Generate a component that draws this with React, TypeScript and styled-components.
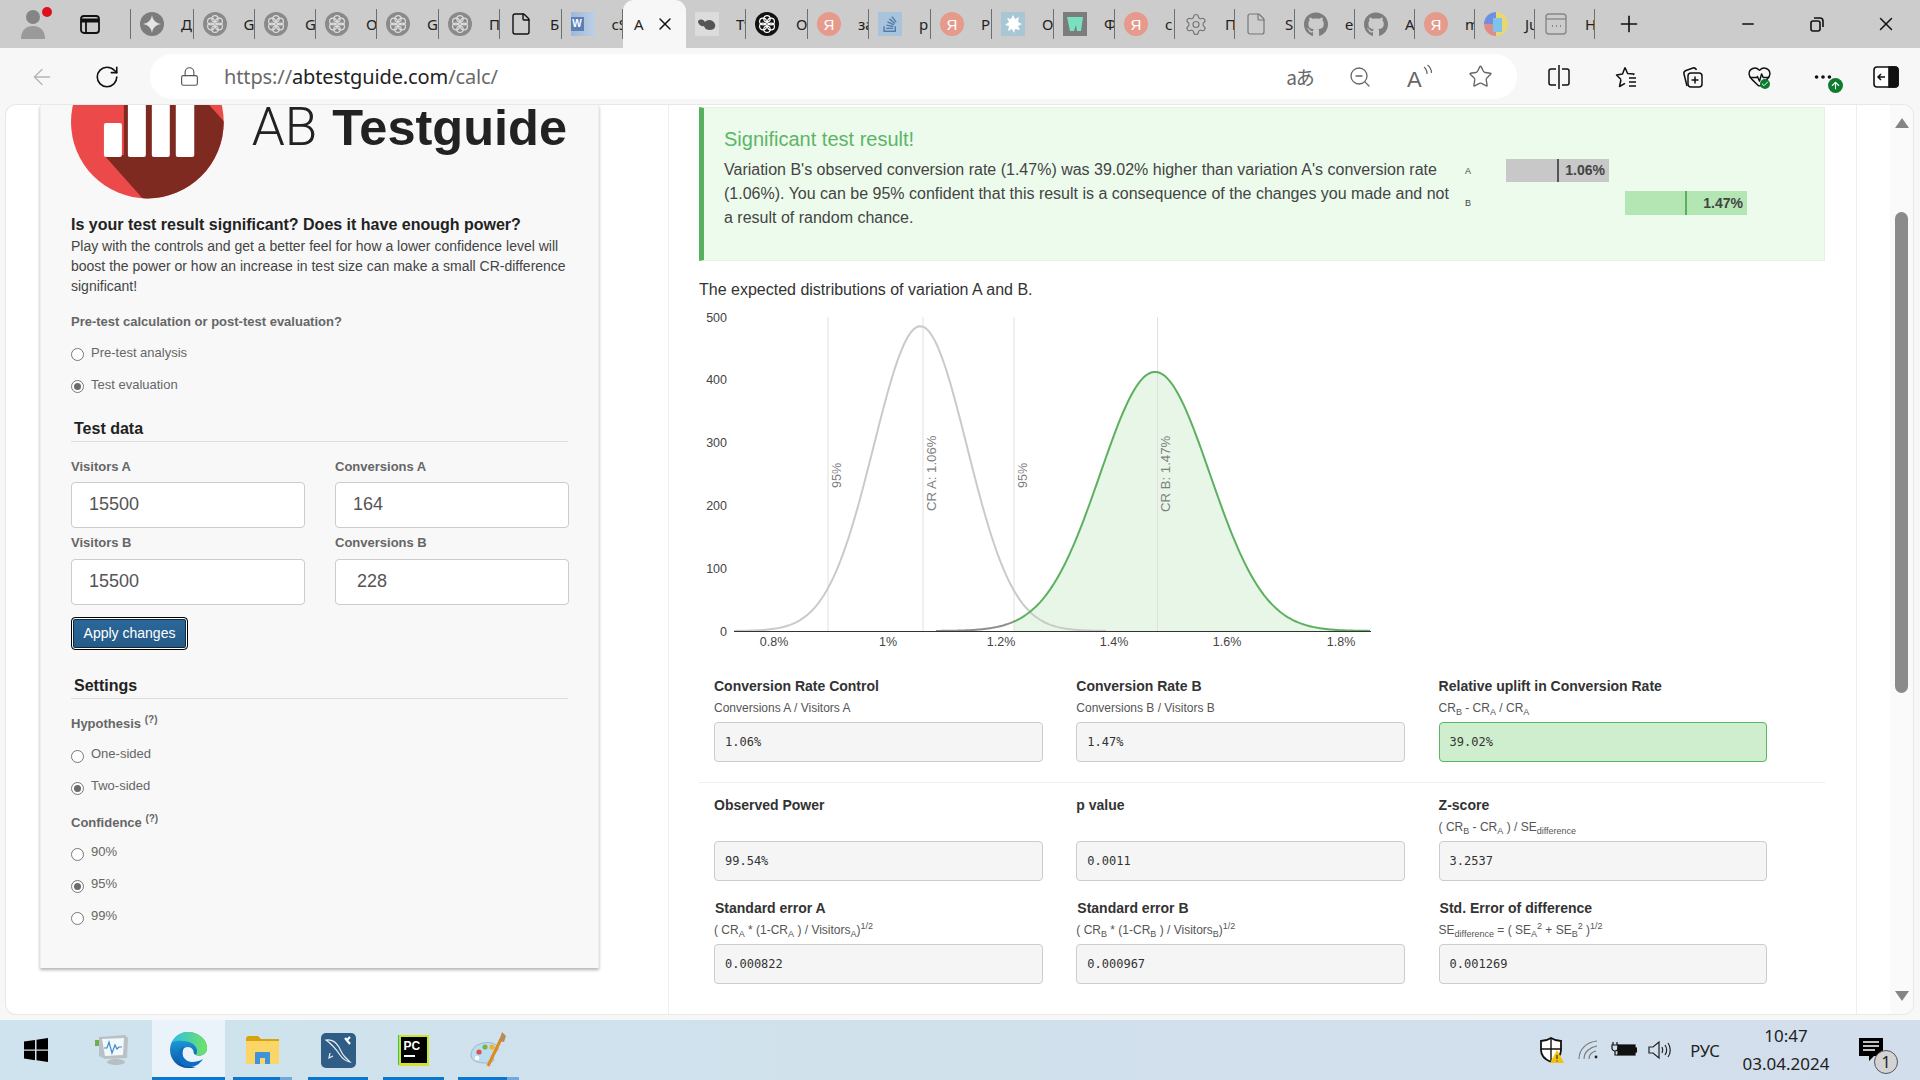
import React from "react";
import styled, { createGlobalStyle } from "styled-components";
import { ArrowLeft, RotateCw, Lock, ZoomOut, Star, Ellipsis, Plus, Minus, X, Settings, File, HeartPulse, Check, ArrowUp } from "lucide-react";
import { FaGithub, FaStackOverflow } from "react-icons/fa";

const Global = createGlobalStyle`
  html, body { margin: 0; padding: 0; background: #f7f7f7; }
  * { box-sizing: border-box; }
  body { font-family: "Liberation Sans", Arial, sans-serif; color: #333; }
`;

const Screen = styled.div`
  width: 1920px; height: 1080px; overflow: hidden; display: flex; flex-direction: column; background: #f7f7f7;
`;

/* ---------- tab strip ---------- */
const TabStrip = styled.div`
  height: 48px; flex: none; background: #cccccc; display: flex; align-items: center;
`;
const Slot = styled.div<{ $w: number; $left?: number }>`
  width: ${p => p.$w}px; flex: none; display: flex; align-items: center; justify-content: center; position: relative; color: #111;
  margin-left: ${p => p.$left ?? 0}px;
`;
const TabList = styled.div`
  margin-left: 16px; display: flex; align-items: center; height: 100%; border-left: 0;
`;
const Tab = styled.div<{ $w: number; $active?: boolean }>`
  width: ${p => p.$w}px; flex: none; overflow: hidden; display: flex; align-items: center; white-space: nowrap;
  font-family: "Noto Sans", sans-serif; font-size: 15px; color: #222;
  height: ${p => (p.$active ? 48 : 30)}px;
  padding-left: ${p => (p.$active ? 11 : 9)}px;
  border-right: ${p => (p.$active ? "0" : "1px solid #6e6e6e")};
  background: ${p => (p.$active ? "#f7f7f7" : "transparent")};
  border-radius: ${p => (p.$active ? "11px 11px 0 0" : "0")};
  align-self: ${p => (p.$active ? "flex-end" : "center")};
`;
const TabLead = styled.div`
  width: 1px; height: 30px; background: #6e6e6e; flex: none;
`;
const TabIcon = styled.div`
  width: 24px; height: 24px; flex: none; display: flex; align-items: center; justify-content: center; margin-right: 17px;
`;
const TabClose = styled.div`
  margin-left: 11px; display: flex; align-items: center; color: #111;
`;
const YaBadge = styled.div`
  width: 24px; height: 24px; border-radius: 50%; background: #e59a8c; color: #fff; font-size: 15px; font-family: "Liberation Sans", sans-serif;
  display: flex; align-items: center; justify-content: center;
`;
const WordBadge = styled.div`
  width: 24px; height: 24px; background: linear-gradient(90deg, #9fb9d8, #bccfe4); display: flex; align-items: center; justify-content: flex-start;
`;
const WordLetter = styled.span`
  background: #5a80b8; color: #fff; font: bold 10px "Liberation Sans", sans-serif; width: 13px; height: 14px; text-align: center; line-height: 14px;
`;
const WindowControls = styled.div`
  margin-left: auto; display: flex;
`;
const AvatarDot = styled.div`
  position: absolute; right: 14.5px; top: -2px; width: 10px; height: 10px; border-radius: 50%; background: #e0101a;
`;

/* ---------- toolbar ---------- */
const Toolbar = styled.div`
  height: 57px; flex: none; display: flex; align-items: flex-start; padding-top: 6px; background: #f7f7f7;
`;
const NavGroup = styled.div`
  margin-left: 16px; display: flex; height: 45px; align-items: center; margin-right: 4px;
`;
const AddressBar = styled.div`
  width: 1367px; height: 45px; flex: none; background: #fff; border-radius: 22px; display: flex; align-items: center; padding: 0 22px 0 25px;
`;
const UrlText = styled.div`
  font-family: "Noto Sans", sans-serif; font-size: 20px; color: #6a6a6a; margin-left: 21px; letter-spacing: -0.12px;
`;
const UrlHost = styled.span`
  color: #222;
`;
const AddressIcons = styled.div`
  margin-left: auto; display: flex; align-items: center; gap: 30px; color: #666;
`;
const AddressIcon = styled.div`
  width: 30px; height: 30px; display: flex; align-items: center; justify-content: center;
`;
const TranslateText = styled.span`
  font-family: "Noto Sans CJK JP", sans-serif; font-size: 19px; color: #666; white-space: nowrap; letter-spacing: -1px;
`;
const ToolGroup = styled.div`
  margin-left: 8px; display: flex; height: 45px; align-items: center;
`;
const UpdateBadge = styled.div`
  position: absolute; left: 35px; top: 12px; width: 15px; height: 15px; border-radius: 50%; background: #0f7b2f; color: #fff;
  display: flex; align-items: center; justify-content: center;
`;
const CheckBadge = styled.div`
  position: absolute; left: 35px; top: 15px; width: 10px; height: 10px; border-radius: 50%; background: #0f7b2f; color: #fff;
  display: flex; align-items: center; justify-content: center;
`;

/* ---------- page ---------- */
const PageArea = styled.div`
  height: 915px; flex: none; padding: 0 7px 6px 6px;
`;
const Card = styled.div`
  height: 909px; background: #fff; border-radius: 10px; box-shadow: 0 0 0 1px #e8e8e8; display: flex; overflow: hidden;
`;
const Sidebar = styled.aside`
  margin-left: 34px; width: 559px; height: 863px; flex: none; background: #f8f8f8; padding: 0 31px;
  border-left: 1px solid #eee; border-right: 1px solid #eee;
  box-shadow: 0 2px 3px rgba(0, 0, 0, 0.3);
  margin-bottom: 3px;
`;
const Brand = styled.div`
  height: 94px; margin-left: -1px; display: flex; align-items: flex-start;
`;
const BrandName = styled.div`
  margin-left: 28px; margin-top: 4px; font-size: 53px; line-height: 36px; color: #222; white-space: nowrap;
  font-family: "Roboto", "Liberation Sans", sans-serif; font-weight: 300;
`;
const BrandBold = styled.b`
  font-family: "Liberation Sans", sans-serif; font-size: 50.5px; font-weight: 700; margin-left: 2px;
`;
const Lead = styled.h2`
  margin: 16px 0 0 -1px; font-size: 16px; line-height: 20px; font-weight: 700; color: #222; white-space: nowrap;
`;
const Intro = styled.p`
  margin: 1px 0 0 -1px; font-size: 14px; line-height: 20px; color: #444; width: 510px;
`;
const Question = styled.div<{ $top: number }>`
  margin: ${p => p.$top}px 0 0 -1px; font-size: 13px; line-height: 20px; font-weight: 700; color: #666;
`;
const Tip = styled.sup`
  font-size: 10px; line-height: 0; font-weight: 700; vertical-align: 5px;
`;
const RadioGroup = styled.div<{ $top: number }>`
  margin: ${p => p.$top}px 0 0 -1px;
`;
const RadioRow = styled.label`
  height: 32px; display: flex; align-items: center; font-size: 13px; color: #666; gap: 7px;
`;
const RadioMark = styled.span<{ $on?: boolean }>`
  width: 13px; height: 13px; margin-top: 3px; border-radius: 50%; border: 1px solid #777; flex: none; background: #fff;
  display: flex; align-items: center; justify-content: center;
  &::after { content: ""; width: 7px; height: 7px; border-radius: 50%; background: ${p => (p.$on ? "#6b6b6b" : "transparent")}; }
`;
const RadioText = styled.span`
  margin-top: -2px;
`;
const SectionTitle = styled.h3<{ $top: number }>`
  margin: ${p => p.$top}px -1px 0 -1px; padding: 0 0 2px 3px; font-size: 16px; line-height: 20px; font-weight: 700; color: #222;
  border-bottom: 1px solid #ddd; height: 23px;
`;
const Fields = styled.div`
  display: grid; grid-template-columns: 233.5px 233.5px; column-gap: 30.5px; margin: 15px 0 0 -1px;
`;
const Field = styled.div<{ $row2?: boolean }>`
  margin-top: ${p => (p.$row2 ? 5 : 0)}px;
`;
const FieldLabel = styled.div<{ $gap: number }>`
  font-size: 13px; line-height: 20px; font-weight: 700; color: #666; margin-bottom: ${p => p.$gap}px;
`;
const NumberBox = styled.input<{ $pad?: number }>`
  display: block; width: 100%; height: 46px; border: 1px solid #ccc; border-radius: 4px; background: #fff; outline: 0;
  font: 18px "Liberation Sans", sans-serif; color: #555; padding: 0 0 0 ${p => p.$pad ?? 17}px;
`;
const ApplyButton = styled.button`
  margin: 12px 0 0 -1px; display: block; width: 117px; height: 33px; padding: 0; border: 1px solid #000; border-radius: 4px;
  background: linear-gradient(#2c689c, #255a86); color: #fff; font: 14px "Liberation Sans", sans-serif;
  box-shadow: inset 0 0 0 1px #fff, inset 0 0 0 2px #10283e;
`;

/* ---------- main ---------- */
const Main = styled.main`
  margin-left: 69px; width: 1189px; flex: none; height: 909px; border-left: 1px solid #eee; border-right: 1px solid #eee;
  padding: 2px 31px 0 30px; overflow: hidden;
`;
const Alert = styled.section`
  height: 154px; background: #ecfbec; border: 1px solid #e3f2e3; border-left: 5px solid #56b05f; display: flex; padding-left: 20px;
`;
const AlertCopy = styled.div`
  width: 736px; flex: none; padding-top: 20px;
`;
const AlertTitle = styled.h4`
  margin: 0; font-size: 20px; line-height: 22px; font-weight: 400; color: #5cb567;
`;
const AlertText = styled.p`
  margin: 8px 0 0; font-size: 16px; line-height: 24px; color: #444;
`;
const Mini = styled.div`
  padding-top: 51px; margin-left: 5px; display: flex; flex-direction: column; gap: 9px;
`;
const MiniRow = styled.div`
  display: flex; align-items: center;
`;
const MiniLetter = styled.span`
  width: 41px; font-size: 9px; color: #444; flex: none;
`;
const MiniBar = styled.div<{ $offset: number; $w: number; $h: number; $bg: string }>`
  position: relative; margin-left: ${p => p.$offset}px; width: ${p => p.$w}px; height: ${p => p.$h}px; background: ${p => p.$bg};
  font-size: 14px; font-weight: 700; color: #444; text-align: right; padding-right: 4px; line-height: ${p => p.$h}px;
`;
const MiniMark = styled.i<{ $x: number; $c: string }>`
  position: absolute; left: ${p => p.$x}px; top: 0; bottom: 0; width: 2px; background: ${p => p.$c};
`;
const ChartCaption = styled.div`
  margin-top: 19px; font-size: 16px; line-height: 20px; color: #333;
`;
const ChartSvg = styled.svg`
  display: block; width: 690px; height: 376px;
  text { font-family: "Liberation Sans", sans-serif; }
`;
const Stats = styled.div<{ $top: number }>`
  padding-left: 15px; display: grid; grid-template-columns: repeat(3, 328.5px); column-gap: 33.8px; margin-top: ${p => p.$top}px;
`;
const StatTitle = styled.div<{ $nudge?: number }>`
  font-size: 14px; line-height: 20px; font-weight: 700; color: #333; margin-left: ${p => p.$nudge ?? 0}px; white-space: nowrap;
`;
const StatFormula = styled.div`
  margin-top: 4px; height: 16px; font-size: 12px; line-height: 16px; color: #555; white-space: nowrap;
  sub, sup { font-size: 9px; line-height: 0; }
`;
const StatBox = styled.div<{ $good?: boolean }>`
  margin-top: 6px; height: 40px; border-radius: 4px; border: 1px solid ${p => (p.$good ? "#5cb567" : "#ccc")};
  background: ${p => (p.$good ? "#cfeecd" : "#f5f5f5")}; padding-left: 10px; line-height: 38px;
  font-family: "DejaVu Sans Mono", monospace; font-size: 12px; color: #333;
`;
const Rule = styled.hr`
  margin: 20px 0 0; border: 0; border-top: 1px solid #eee; height: 0;
`;
const Gutter = styled.div`
  width: 56px; flex: none; padding-left: 33px;
`;
const Track = styled.div`
  height: 909px; background: #fafafa; display: flex; flex-direction: column; align-items: center; padding: 13px 0;
`;
const ArrowUpMark = styled.div`
  width: 0; height: 0; border-left: 7px solid transparent; border-right: 7px solid transparent; border-bottom: 10px solid #858585;
`;
const ArrowDownMark = styled.div`
  margin-top: auto; width: 0; height: 0; border-left: 7px solid transparent; border-right: 7px solid transparent; border-top: 10px solid #858585;
`;
const Thumb = styled.div`
  margin-top: 84px; width: 13px; height: 481px; border-radius: 7px; background: #8b8b8b;
`;

/* ---------- taskbar ---------- */
const Taskbar = styled.footer`
  height: 60px; flex: none; display: flex; align-items: stretch;
  background: linear-gradient(90deg, #cee3ed, #d0e1ec 45%, #d3deec);
`;
const TaskItem = styled.div<{ $w: number; $active?: boolean; $inset?: number; $blue?: number }>`
  position: relative; width: ${p => p.$w}px; flex: none; display: flex; align-items: center; justify-content: center;
  background: ${p => (p.$active ? "#e9f3f9" : "transparent")};
  &::after {
    content: ""; display: ${p => (p.$blue ? "block" : "none")}; position: absolute; bottom: 0; height: 3px;
    left: ${p => p.$inset ?? 0}px; right: ${p => p.$inset ?? 0}px;
    background: linear-gradient(90deg, #0a78cf ${p => p.$blue}%, #6fa9de ${p => p.$blue}%);
  }
`;
const PcIcon = styled.div`
  width: 30px; height: 30px; background: #000; border: 2px solid #cde32c; color: #fff; font: bold 12px "Liberation Sans", sans-serif;
  padding: 3px 0 0 3px; line-height: 12px; box-shadow: -1px 0 0 #2fc36c, 0 1px 0 #e2dc2b;
`;
const PcBar = styled.div`
  width: 11px; height: 2px; background: #fff; margin-top: 3px;
`;
const Tray = styled.div`
  margin-left: auto; display: flex; align-items: stretch;
`;
const TrayItem = styled.div<{ $w: number }>`
  width: ${p => p.$w}px; flex: none; display: flex; align-items: center; justify-content: center; position: relative; color: #222;
`;
const TrayText = styled.div`
  font-family: "Noto Sans", sans-serif; font-size: 16.5px; color: #222;
`;
const Clock = styled.div`
  font-family: "Noto Sans", sans-serif; font-size: 17px; line-height: 28px; text-align: center; color: #222;
`;
const NotifyCount = styled.div`
  position: absolute; left: 30px; top: 30px; width: 24px; height: 24px; border-radius: 50%; background: #d3d3d3; border: 1px solid #555;
  font: 16px "Noto Sans", sans-serif; color: #222; display: flex; align-items: center; justify-content: center;
`;

/* ---------- drawings ---------- */
const GptMark = ({ bg, fg }: { bg: string; fg: string }) => (
  <svg width="24" height="24" viewBox="0 0 24 24">
    <circle cx="12" cy="12" r="12" fill={bg} />
    <g fill="none" stroke={fg} strokeWidth="1.2">
      <circle cx="8" cy="9.5" r="3.4" />
      <circle cx="16" cy="9.5" r="3.4" />
      <circle cx="8" cy="14.5" r="3.4" />
      <circle cx="16" cy="14.5" r="3.4" />
      <circle cx="12" cy="6.8" r="3.2" />
      <circle cx="12" cy="17.2" r="3.2" />
    </g>
  </svg>
);
const SparkMark = () => (
  <svg width="24" height="24" viewBox="0 0 24 24">
    <circle cx="12" cy="12" r="12" fill="#7c7c7c" />
    <path d="M12 3c.8 5 3.5 8.200 9 9-5.500.8-8.200 4-9 9-.8-5-3.500-8.200-9-9 5.500-.8 8.200-4 9-9z" fill="#e4e4e4" />
  </svg>
);
const RaccMark = () => (
  <svg width="24" height="24" viewBox="0 0 24 24">
    <rect width="24" height="24" fill="#dcdcdc" />
    <path d="M3 9c3-3 6-1 7 1 2-3 8-3 10 2 1 3-1 6-5 6-3 0-5-1-6-4-3 1-6-2-6-5z" fill="#555" />
  </svg>
);
const StackMark = () => (
  <svg width="24" height="24" viewBox="0 0 24 24">
    <rect width="24" height="24" fill="#a9c3dc" />
    <foreignObject x="3" y="3" width="18" height="18"><FaStackOverflow size={18} color="#4f7ca8" /></foreignObject>
  </svg>
);
const SplatMark = () => (
  <svg width="24" height="24" viewBox="0 0 24 24">
    <rect width="24" height="24" fill="#a8c6d4" />
    <path d="M12 3l2 4 4-2-1 5 4 2-4 2 2 4-5-1-1 4-2-4-4 2 1-5-4-1 4-3-2-4 4 1z" fill="#fff" />
  </svg>
);
const TealMark = () => (
  <svg width="24" height="24" viewBox="0 0 24 24">
    <rect width="24" height="24" fill="#7c7c7c" />
    <path d="M4 5h16l-2 14h-4l-1-6-2 6H7z" fill="#7be0c0" />
  </svg>
);
const MultiMark = () => (
  <svg width="24" height="24" viewBox="0 0 24 24">
    <circle cx="12" cy="12" r="12" fill="#e9d772" />
    <path d="M12 0a12 12 0 0 0-12 12h12z" fill="#6f8fe0" />
    <path d="M0 12a12 12 0 0 0 12 12V12z" fill="#df8b8b" />
    <rect x="9" y="6" width="9" height="14" fill="#7fc2ea" />
  </svg>
);
const WinTabMark = () => (
  <svg width="24" height="24" viewBox="0 0 24 24" fill="none" stroke="#888" strokeWidth="1.4">
    <rect x="2" y="2" width="20" height="20" rx="3" />
    <path d="M2 7h20" />
    <path d="M8 14h1M12 14h1M16 14h1" strokeWidth="2" />
  </svg>
);
const PanelMark = () => (
  <svg width="26" height="24" viewBox="0 0 26 24" fill="none" stroke="#111" strokeWidth="1.6">
    <rect x="1" y="2" width="24" height="20" rx="3" fill="#fff" />
    <path d="M16 2h6a3 3 0 0 1 3 3v14a3 3 0 0 1-3 3h-6z" fill="#111" />
    <path d="M12 12H5M8 9l-3 3 3 3" strokeWidth="1.5" />
  </svg>
);
const SplitMark = () => (
  <svg width="24" height="26" viewBox="0 0 24 26" fill="none" stroke="#111" strokeWidth="1.5">
    <path d="M9 5H4a2 2 0 0 0-2 2v12a2 2 0 0 0 2 2h5" />
    <path d="M12 1v24" />
    <path d="M15 5h5a2 2 0 0 1 2 2v12a2 2 0 0 1-2 2h-5" />
  </svg>
);
const RestoreMark = () => (
  <svg width="16" height="16" viewBox="0 0 16 16" fill="none" stroke="#111" strokeWidth="1.6">
    <rect x="2" y="5" width="9" height="10" rx="2" />
    <path d="M5 2h6a3 3 0 0 1 3 3v6" />
  </svg>
);
const FavoritesMark = () => (
  <svg width="24" height="24" viewBox="0 0 24 24" fill="none" stroke="#111" strokeWidth="1.5" strokeLinejoin="round">
    <path d="M11 2.500l2.600 6 6.400.5-1 .8M7 14.500l-1.500 7 5.500-3.200M7 14.500L2.500 10l6-.9L11 2.500" />
    <path d="M15 13h7M15 17h7M15 21h7" />
  </svg>
);
const CollectionsMark = () => (
  <svg width="26" height="26" viewBox="0 0 26 26" fill="none" stroke="#111" strokeWidth="1.5">
    <path d="M8 22L5 10c-.5-2 .5-3 2-3.500L14 4c2-.5 3 .5 3.500 2" />
    <rect x="9" y="9" width="14" height="14" rx="3" />
    <path d="M16 12.500v7M12.500 16h7" />
  </svg>
);
const ReadAloudMark = () => (
  <svg width="30" height="26" viewBox="0 0 30 26" fill="none" stroke="#666" strokeWidth="1.2">
    <text x="2" y="23" fontFamily="Liberation Sans, sans-serif" fontSize="22" fill="#666" stroke="none">A</text>
    <path d="M19 3c2 1.500 3 4 3 7M22.500 1c2.500 2 4 5 4 8" />
  </svg>
);
const BrandMark = () => (
  <svg width="153" height="94" viewBox="0 0 153 94">
    <defs>
      <clipPath id="brandDisc"><circle cx="76.500" cy="17" r="76.500" /></clipPath>
    </defs>
    <circle cx="76.500" cy="17" r="76.500" fill="#ec4a4a" />
    <g clipPath="url(#brandDisc)">
      <polygon points="33,50 74,96 160,96 160,24 136,-3 53,-3 53,50" fill="#7f2a20" />
    </g>
    <g fill="#fff">
      <rect x="33" y="18" width="18" height="34" rx="2" />
      <rect x="57" y="-4" width="18" height="56" rx="2" />
      <rect x="81" y="-4" width="18" height="56" rx="2" />
      <rect x="105" y="-4" width="18.500" height="56" rx="2" />
    </g>
  </svg>
);
const EdgeMark = () => (
  <svg width="37" height="36" viewBox="0 0 37 36">
    <defs>
      <linearGradient id="edgeA" x1="0.3" y1="1" x2="0.2" y2="0.1"><stop offset="0" stopColor="#0b4f9c" /><stop offset="1" stopColor="#1fa6e4" /></linearGradient>
      <linearGradient id="edgeB" x1="0" y1="0.5" x2="1" y2="0.5"><stop offset="0" stopColor="#2fbde8" /><stop offset="1" stopColor="#70e55f" /></linearGradient>
    </defs>
    <path d="M18 0c10 0 19 7 19 16 0 6-6 9-11 7-3-1-2-3-3-5-2-4-8-4-11 0-3 4-2 10 3 14 3 2 7 3 11 3-3 1-5 1-8 1C8 36 0 28 0 18S8 0 18 0z" fill="url(#edgeA)" />
    <path d="M2 10C6 3 12 0 18 0c10 0 19 7 19 16 0 6-6 9-11 7 2-4 1-8-3-11-6-4-15-4-21-2z" fill="url(#edgeB)" />
    <path d="M13 24c2 5 9 9 20 3-3 5-8 8-14 8-6 0-11-5-11-11 0-5 3-8 7-10-2 3-3 6-2 10z" fill="#0e6ec4" />
  </svg>
);
const FolderMark = () => (
  <svg width="33" height="28" viewBox="0 0 33 28">
    <path d="M0 3a3 3 0 0 1 3-3h9l3 3h18v5H0z" fill="#d9a20f" />
    <path d="M0 5h33v21a2 2 0 0 1-2 2H2a2 2 0 0 1-2-2z" fill="#fbd565" />
    <path d="M10 16h13a1 1 0 0 1 1 1v11h-5v-6h-5v6H9V17a1 1 0 0 1 1-1z" fill="#3f93d8" />
  </svg>
);
const MonitorMark = () => (
  <svg width="34" height="30" viewBox="0 0 34 30">
    <path d="M4 2l26-2 3 3-1 20-22 1-6-3z" fill="#b9c1c6" />
    <path d="M7 4l22-1-1 17-18 1z" fill="#f2f8fc" />
    <path d="M9 13h3l2-6 3 11 3-8 2 4 2-2h3" fill="none" stroke="#3d87c9" strokeWidth="1.2" />
    <ellipse cx="21" cy="27" rx="9" ry="3" fill="#b8bec2" />
    <rect x="0" y="5" width="4" height="6" fill="#6bb04b" />
  </svg>
);
const MysqlMark = () => (
  <svg width="35" height="35" viewBox="0 0 35 35">
    <rect width="35" height="35" rx="5" fill="#2f5d86" />
    <path d="M5 7c6-1 10 2 13 7 2 4 3 7 6 10l5 5c-5-1-8-4-10-7-4-6-7-10-14-15zM9 20l-1 5 4-2" fill="none" stroke="#e8f0f6" strokeWidth="1.2" />
    <path d="M24 5l5 6M29 4l-3 3" stroke="#fff" strokeWidth="2.200" fill="none" />
  </svg>
);
const PaletteMark = () => (
  <svg width="37" height="36" viewBox="0 0 37 36">
    <path d="M1 23C1 14 12 9 22 11c7 2 8 7 3 10-4 2-4 3-2 5 3 3-2 5-7 5C8 31 1 29 1 23z" fill="#bcdcf0" stroke="#9bb9cf" />
    <circle cx="9" cy="20" r="2.600" fill="#d9534f" /><circle cx="15" cy="15" r="2.600" fill="#7cb342" /><circle cx="22" cy="15" r="2.600" fill="#f0b429" /><circle cx="7" cy="26" r="2.200" fill="#fff" />
    <path d="M18 34L31 7" stroke="#e08a1e" strokeWidth="3" />
    <path d="M29 9l3-9 4 4-2 6z" fill="#b98a55" />
  </svg>
);
const WindowsMark = () => (
  <svg width="24" height="24" viewBox="0 0 24 24" fill="#000">
    <path d="M0 3.500l11-1.500v9.500H0zM12.500 1.800L24 0v11.500H12.500zM0 12.800h11v9.400L0 20.600zM12.500 12.800H24V24l-11.500-1.800z" />
  </svg>
);
const ShieldMark = () => (
  <svg width="26" height="28" viewBox="0 0 26 28">
    <path d="M12 2c3 2 6 3 10 3v9c0 6-5 10-10 12C7 24 2 20 2 14V5c4 0 7-1 10-3z" fill="#fff" stroke="#111" strokeWidth="1.8" />
    <path d="M12 2v24M2 13h20" stroke="#111" strokeWidth="1.4" />
    <path d="M18 14l7 13H11z" fill="#f4c20d" />
    <path d="M18 19v4M18 24.500v1" stroke="#333" strokeWidth="1.200" />
  </svg>
);
const WifiMark = () => (
  <svg width="22" height="20" viewBox="0 0 22 20" fill="none" stroke="#777" strokeWidth="1.100">
    <path d="M1 19C1 9 9 2 19 1M6 19c0-7 6-12 13-13M11 19c0-4 3-7 7-8" />
    <circle cx="18" cy="17" r="1.400" fill="#222" stroke="none" />
  </svg>
);
const BatteryMark = () => (
  <svg width="26" height="18" viewBox="0 0 26 18" fill="none" stroke="#111" strokeWidth="1.200">
    <path d="M2 1v3M6 1v3M1 4h6v3a3 3 0 0 1-6 0zM4 10v4h3" />
    <rect x="7" y="4" width="17" height="10" fill="#111" />
    <rect x="24" y="7" width="2" height="4" fill="#111" />
  </svg>
);
const SpeakerMark = () => (
  <svg width="24" height="20" viewBox="0 0 24 20" fill="none" stroke="#222" strokeWidth="1.200">
    <path d="M1 7h4l6-5v16l-6-5H1z" />
    <path d="M14 7c1 2 1 4 0 6M17 5c2 3 2 7 0 10M20 3c3 4 3 10 0 14" />
  </svg>
);
const NotifyMark = () => (
  <svg width="24" height="24" viewBox="0 0 24 24">
    <path d="M0 0h24v18H15l-5 5v-5H0z" fill="#000" />
    <path d="M4 4h16M4 8h16M4 12h12" stroke="#fff" strokeWidth="1.300" />
  </svg>
);

/* ---------- data ---------- */
type TabDef = { w: number; icon: React.ReactNode; label: string };
const gray = <GptMark bg="#8a8a8a" fg="#dedede" />;
const ya = <YaBadge>Я</YaBadge>;
const docOutline = <File size={26} strokeWidth={1.4} color="#111" />;
const docGray = <File size={26} strokeWidth={1.2} color="#777" />;
const github = <FaGithub size={25} color="#7d7d7d" />;
const before: TabDef[] = [
  { w: 62.500, icon: <SparkMark />, label: "Д" },
  { w: 61.500, icon: gray, label: "G" },
  { w: 61, icon: gray, label: "G" },
  { w: 61, icon: gray, label: "О" },
  { w: 62, icon: gray, label: "G" },
  { w: 61, icon: gray, label: "П" },
  { w: 61.500, icon: docOutline, label: "Б" },
  { w: 61.500, icon: <WordBadge><WordLetter>W</WordLetter></WordBadge>, label: "cS" },
];
const after: TabDef[] = [
  { w: 60, icon: <RaccMark />, label: "Тv" },
  { w: 62, icon: <GptMark bg="#111" fg="#fff" />, label: "О" },
  { w: 61, icon: ya, label: "за" },
  { w: 62, icon: <StackMark />, label: "р" },
  { w: 61, icon: ya, label: "Р" },
  { w: 62, icon: <SplatMark />, label: "О" },
  { w: 61, icon: <TealMark />, label: "Ф" },
  { w: 60, icon: ya, label: "с" },
  { w: 60, icon: <Settings size={25} strokeWidth={1.2} color="#777" />, label: "П" },
  { w: 60, icon: docGray, label: "S" },
  { w: 60, icon: github, label: "е" },
  { w: 60, icon: github, label: "А" },
  { w: 60, icon: ya, label: "m" },
  { w: 60, icon: <MultiMark />, label: "Ju" },
  { w: 60, icon: <WinTabMark />, label: "Н" },
];

const gaussian = (mu: number, sd: number) => (pct: number) =>
  Math.exp(-0.5 * ((pct - mu) / sd) ** 2) / (sd * 0.01 * Math.sqrt(2 * Math.PI));
const xOf = (pct: number) => 774 + (pct - 0.8) * 567;
const pctOf = (x: number) => 0.8 + (x - 774) / 567;
const yOf = (v: number) => 631 - 0.628 * v;
const curve = (fn: (p: number) => number, x0: number, x1: number) => {
  const pts: string[] = [];
  for (let x = x0; x <= x1; x += 2) pts.push(`${x},${yOf(fn(pctOf(x))).toFixed(2)}`);
  return pts.join(" ");
};
const curveA = gaussian(1.058, 0.0822);
const curveB = gaussian(1.472, 0.0967);

const Chart = () => (
  <ChartSvg viewBox="699 300 690 376">
    <polygon points={`1014,631 ${curve(curveB, 1014, 1370)} 1370,631`} fill="#e8f6e8" />
    {[828, 923, 1014, 1157.5].map(x => (
      <line key={x} x1={x} x2={x} y1={317} y2={631} stroke="#e0e0e0" strokeWidth="1" />
    ))}
    <polyline points={curve(curveA, 734, 1106)} fill="none" stroke="#cacaca" strokeWidth="2" />
    <polyline points={curve(curveB, 936, 1014)} fill="none" stroke="#8e8e8e" strokeWidth="2" />
    <polyline points={curve(curveB, 1014, 1370)} fill="none" stroke="#5cb060" strokeWidth="2" />
    <line x1="734" x2="1371" y1="631.500" y2="631.500" stroke="#333" strokeWidth="1" />
    {[500, 400, 300, 200, 100, 0].map(v => (
      <text key={v} x="727" y={yOf(v) + 4.500} textAnchor="end" fontSize="12.500" fill="#444">{v}</text>
    ))}
    {[["0.8%", 774], ["1%", 888], ["1.2%", 1001], ["1.4%", 1114], ["1.6%", 1227], ["1.8%", 1341]].map(([t, x]) => (
      <text key={t as string} x={x as number} y="645.500" textAnchor="middle" fontSize="12.500" fill="#444">{t}</text>
    ))}
    {[["95%", 841, 488, 12.5], ["CR A: 1.06%", 936, 511, 13.2], ["95%", 1027, 488, 12.5], ["CR B: 1.47%", 1169.500, 512, 13.2]].map(([t, x, y, s]) => (
      <text key={`${t}${x}`} transform={`translate(${x} ${y}) rotate(-90)`} fontSize={s as number} fill="#808080">{t}</text>
    ))}
  </ChartSvg>
);

const renderTab = (t: TabDef, i: number) => (
  <Tab key={i} $w={t.w}>
    <TabIcon>{t.icon}</TabIcon>
    {t.label}
  </Tab>
);

const Radio = ({ on, children }: { on?: boolean; children: React.ReactNode }) => (
  <RadioRow>
    <RadioMark $on={on} />
    <RadioText>{children}</RadioText>
  </RadioRow>
);

const Stat = ({ title, formula, value, good, nudge }: { title: string; formula?: React.ReactNode; value: string; good?: boolean; nudge?: number }) => (
  <div>
    <StatTitle $nudge={nudge}>{title}</StatTitle>
    <StatFormula>{formula}</StatFormula>
    <StatBox $good={good}>{value}</StatBox>
  </div>
);

export default function App() {
  return (
    <Screen>
      <Global />
      <TabStrip>
        <Slot $w={66}>
          <svg width="26" height="30" viewBox="0 0 26 30">
            <circle cx="13" cy="8" r="7" fill="#858585" />
            <path d="M1 30c0-9 5-13 12-13s12 4 12 13z" fill="#9a9a9a" />
          </svg>
          <AvatarDot />
        </Slot>
        <Slot $w={48}>
          <svg width="22" height="22" viewBox="0 0 22 22" fill="none" stroke="#111" strokeWidth="1.800">
            <rect x="2" y="3" width="18" height="17" rx="3" />
            <path d="M2 7.500h18" strokeWidth="4" />
            <path d="M7 7.500V20" />
          </svg>
        </Slot>
        <TabList>
          <TabLead />
          {before.map(renderTab)}
          <Tab $w={63} $active>
            A
            <TabClose><X size={20} strokeWidth={1.7} /></TabClose>
          </Tab>
          {after.map(renderTab)}
        </TabList>
        <Slot $w={48} $left={10}><Plus size={26} strokeWidth={1.5} /></Slot>
        <WindowControls>
          <Slot $w={69}><Minus size={18} strokeWidth={1.8} /></Slot>
          <Slot $w={69}><RestoreMark /></Slot>
          <Slot $w={69}><X size={22} strokeWidth={1.6} /></Slot>
        </WindowControls>
      </TabStrip>

      <Toolbar>
        <NavGroup>
          <Slot $w={52}><ArrowLeft size={26} strokeWidth={1.2} color="#b5b5b5" /></Slot>
          <Slot $w={78}><RotateCw size={26} strokeWidth={1.5} color="#111" /></Slot>
        </NavGroup>
        <AddressBar>
          <Slot $w={28}><Lock size={21} strokeWidth={1.3} color="#555" /></Slot>
          <UrlText>https://<UrlHost>abtestguide.com</UrlHost>/calc/</UrlText>
          <AddressIcons>
            <AddressIcon><TranslateText>aあ</TranslateText></AddressIcon>
            <AddressIcon><ZoomOut size={24} strokeWidth={1.3} /></AddressIcon>
            <AddressIcon><ReadAloudMark /></AddressIcon>
            <AddressIcon><Star size={25} strokeWidth={1.3} /></AddressIcon>
          </AddressIcons>
        </AddressBar>
        <ToolGroup>
          <Slot $w={68}><SplitMark /></Slot>
          <Slot $w={66}><FavoritesMark /></Slot>
          <Slot $w={66}><CollectionsMark /></Slot>
          <Slot $w={68}>
            <HeartPulse size={25} strokeWidth={1.4} />
            <CheckBadge><Check size={8} strokeWidth={3} /></CheckBadge>
          </Slot>
          <Slot $w={60}>
            <Ellipsis size={22} strokeWidth={2} />
            <UpdateBadge><ArrowUp size={11} strokeWidth={2.500} /></UpdateBadge>
          </Slot>
          <Slot $w={66}><PanelMark /></Slot>
        </ToolGroup>
      </Toolbar>

      <PageArea>
        <Card>
          <Sidebar>
            <Brand>
              <BrandMark />
              <BrandName>AB <BrandBold>Testguide</BrandBold></BrandName>
            </Brand>
            <Lead>Is your test result significant? Does it have enough power?</Lead>
            <Intro>Play with the controls and get a better feel for how a lower confidence level will boost the power or how an increase in test size can make a small CR-difference significant!</Intro>
            <Question $top={16}>Pre-test calculation or post-test evaluation?</Question>
            <RadioGroup $top={5}>
              <Radio>Pre-test analysis</Radio>
              <Radio on>Test evaluation</Radio>
            </RadioGroup>
            <SectionTitle $top={18}>Test data</SectionTitle>
            <Fields>
              <Field><FieldLabel $gap={4.5}>Visitors A</FieldLabel><NumberBox readOnly defaultValue="15500" /></Field>
              <Field><FieldLabel $gap={4.5}>Conversions A</FieldLabel><NumberBox readOnly defaultValue="164" /></Field>
              <Field $row2><FieldLabel $gap={6}>Visitors B</FieldLabel><NumberBox readOnly defaultValue="15500" /></Field>
              <Field $row2><FieldLabel $gap={6}>Conversions B</FieldLabel><NumberBox readOnly defaultValue="228" $pad={21} /></Field>
            </Fields>
            <ApplyButton>Apply changes</ApplyButton>
            <SectionTitle $top={26}>Settings</SectionTitle>
            <Question $top={15}>Hypothesis <Tip>(?)</Tip></Question>
            <RadioGroup $top={5}>
              <Radio>One-sided</Radio>
              <Radio on>Two-sided</Radio>
            </RadioGroup>
            <Question $top={10}>Confidence <Tip>(?)</Tip></Question>
            <RadioGroup $top={4}>
              <Radio>90%</Radio>
              <Radio on>95%</Radio>
              <Radio>99%</Radio>
            </RadioGroup>
          </Sidebar>

          <Main>
            <Alert>
              <AlertCopy>
                <AlertTitle>Significant test result!</AlertTitle>
                <AlertText>Variation B's observed conversion rate (1.47%) was 39.02% higher than variation A's conversion rate (1.06%). You can be 95% confident that this result is a consequence of the changes you made and not a result of random chance.</AlertText>
              </AlertCopy>
              <Mini>
                <MiniRow>
                  <MiniLetter>A</MiniLetter>
                  <MiniBar $offset={0} $w={103} $h={23} $bg="#c8c8c8"><MiniMark $x={51} $c="#555" />1.06%</MiniBar>
                </MiniRow>
                <MiniRow>
                  <MiniLetter>B</MiniLetter>
                  <MiniBar $offset={119} $w={122} $h={24} $bg="#b3e6b3"><MiniMark $x={60} $c="#56b05f" />1.47%</MiniBar>
                </MiniRow>
              </Mini>
            </Alert>
            <ChartCaption>The expected distributions of variation A and B.</ChartCaption>
            <Chart />
            <Stats $top={0}>
              <Stat title="Conversion Rate Control" formula="Conversions A / Visitors A" value="1.06%" />
              <Stat title="Conversion Rate B" formula="Conversions B / Visitors B" value="1.47%" />
              <Stat title="Relative uplift in Conversion Rate" formula={<>CR<sub>B</sub> - CR<sub>A</sub> / CR<sub>A</sub></>} value="39.02%" good />
            </Stats>
            <Rule />
            <Stats $top={12}>
              <Stat title="Observed Power" value="99.54%" />
              <Stat title="p value" value="0.0011" />
              <Stat title="Z-score" formula={<>( CR<sub>B</sub> - CR<sub>A</sub> ) / SE<sub>difference</sub></>} value="3.2537" />
            </Stats>
            <Stats $top={17}>
              <Stat nudge={1} title="Standard error A" formula={<>( CR<sub>A</sub> * (1-CR<sub>A</sub> ) / Visitors<sub>A</sub>)<sup>1/2</sup></>} value="0.000822" />
              <Stat nudge={1} title="Standard error B" formula={<>( CR<sub>B</sub> * (1-CR<sub>B</sub> ) / Visitors<sub>B</sub>)<sup>1/2</sup></>} value="0.000967" />
              <Stat nudge={1} title="Std. Error of difference" formula={<>SE<sub>difference</sub> = ( SE<sub>A</sub><sup>2</sup> + SE<sub>B</sub><sup>2</sup> )<sup>1/2</sup></>} value="0.001269" />
            </Stats>
          </Main>

          <Gutter>
            <Track>
              <ArrowUpMark />
              <Thumb />
              <ArrowDownMark />
            </Track>
          </Gutter>
        </Card>
      </PageArea>

      <Taskbar>
        <TaskItem $w={72}><WindowsMark /></TaskItem>
        <TaskItem $w={80}><MonitorMark /></TaskItem>
        <TaskItem $w={73} $active $blue={100}><EdgeMark /></TaskItem>
        <TaskItem $w={75} $inset={8} $blue={80}><FolderMark /></TaskItem>
        <TaskItem $w={76} $inset={8} $blue={100}><MysqlMark /></TaskItem>
        <TaskItem $w={75} $inset={7} $blue={100}><PcIcon>PC<PcBar /></PcIcon></TaskItem>
        <TaskItem $w={75} $inset={7} $blue={80}><PaletteMark /></TaskItem>
        <Tray>
          <TrayItem $w={32}><ShieldMark /></TrayItem>
          <TrayItem $w={42}><WifiMark /></TrayItem>
          <TrayItem $w={28}><BatteryMark /></TrayItem>
          <TrayItem $w={44}><SpeakerMark /></TrayItem>
          <TrayItem $w={46}><TrayText>РУС</TrayText></TrayItem>
          <TrayItem $w={116}><Clock>10:47<br />03.04.2024</Clock></TrayItem>
          <TrayItem $w={53}>
            <NotifyMark />
            <NotifyCount>1</NotifyCount>
          </TrayItem>
          <TrayItem $w={23} />
        </Tray>
      </Taskbar>
    </Screen>
  );
}
